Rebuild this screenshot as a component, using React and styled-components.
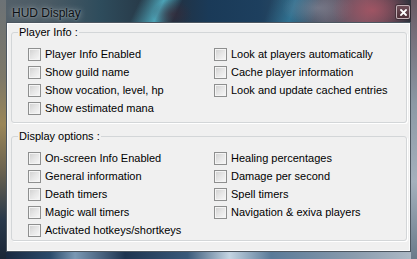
import React from "react";
import styled, { createGlobalStyle } from "styled-components";

const GlobalStyle = createGlobalStyle`
  html, body {
    margin: 0;
    padding: 0;
    background: #2a3038;
  }
`;

const playerInfo = [
  "Player Info Enabled",
  "Show guild name",
  "Show vocation, level, hp",
  "Show estimated mana",
  "Look at players automatically",
  "Cache player information",
  "Look and update cached entries",
];

const displayOptions = [
  "On-screen Info Enabled",
  "General information",
  "Death timers",
  "Magic wall timers",
  "Activated hotkeys/shortkeys",
  "Healing percentages",
  "Damage per second",
  "Spell timers",
  "Navigation & exiva players",
];

const HudDisplay = () => {
  return (
    <Window>
      <TitleBar>
        <Title>HUD Display</Title>
        <CloseBtn aria-label="Close">
          <svg width="7" height="7" viewBox="0 0 7 7">
            <path
              d="M1 1 L6 6 M6 1 L1 6"
              stroke="#fff"
              strokeWidth="1.8"
              strokeLinecap="square"
            />
          </svg>
        </CloseBtn>
      </TitleBar>

      <Client>
        <Group>
          <Legend>Player Info :</Legend>
          <Options $rows={4} $bottom={5}>
            {playerInfo.map((label) => (
              <Option key={label}>
                <Check type="checkbox" />
                {label}
              </Option>
            ))}
          </Options>
        </Group>

        <Group $top={7}>
          <Legend>Display options :</Legend>
          <Options $rows={5} $bottom={1}>
            {displayOptions.map((label) => (
              <Option key={label}>
                <Check type="checkbox" />
                {label}
              </Option>
            ))}
          </Options>
        </Group>
      </Client>
    </Window>
  );
};

const Window = styled.div`
  width: 417px;
  height: 259px;
  box-sizing: border-box;
  padding: 0 6px 7px 6px;
  display: flex;
  flex-direction: column;
  font-family: "Liberation Sans", Arial, sans-serif;
  background:
    linear-gradient(180deg, #6c7276 0%, #7d7868 30%, #9a8658 48%, #6a6250 66%, #28384a 85%, #1a2636 100%) left top / 6px 100% no-repeat,
    linear-gradient(180deg, #6a5a64 0%, #8c98a4 40%, #a4b0bc 70%, #6a7a8a 100%) right top / 6px 100% no-repeat,
    linear-gradient(90deg, #16243a 0%, #2a4a6a 12%, #7a98b4 18%, #1e3450 30%, #3a5a7a 45%, #c4d4e2 55%, #5a7a98 65%, #8a9cae 85%, #b0bcc8 100%) left bottom / 100% 7px no-repeat,
    radial-gradient(ellipse 40px 26px at 372px 10px, rgba(165, 85, 100, 0.9), transparent),
    radial-gradient(ellipse 36px 18px at 318px 8px, rgba(150, 150, 165, 0.5), transparent),
    radial-gradient(ellipse 20px 14px at 172px 14px, rgba(60, 40, 55, 0.6), transparent),
    linear-gradient(115deg, transparent 26%, rgba(80, 175, 195, 0.9) 30.5%, transparent 34%),
    linear-gradient(108deg, transparent 54%, rgba(50, 130, 165, 0.7) 59%, transparent 64%),
    linear-gradient(90deg, #55616a 0%, #4a5a64 12%, #2e4c5c 24%, #24303e 40%, #1a3a58 50%, #1d3f5e 62%, #2c4a62 70%, #5a5a6a 78%, #6e5260 88%, #3c3844 96%, #2a3038 100%);
`;

const TitleBar = styled.div`
  height: 22px;
  flex: none;
  display: flex;
  align-items: flex-start;
  justify-content: space-between;
  margin: 0 -6px;
  padding: 0 7px 0 12px;
`;

const Title = styled.span`
  margin-top: 6px;
  font-family: "Liberation Sans", Arial, sans-serif;
  font-size: 12px;
  line-height: 14px;
  color: #0c1014;
  text-shadow: 0 0 6px rgba(255, 255, 255, 0.6), 0 0 2px rgba(255, 255, 255, 0.35);
`;

const CloseBtn = styled.button`
  margin-top: 5px;
  width: 14px;
  height: 14px;
  padding: 0;
  display: flex;
  align-items: center;
  justify-content: center;
  border: 1px solid rgba(220, 205, 210, 0.8);
  border-radius: 2px;
  background: linear-gradient(180deg, #6e4e58 0%, #4e3038 100%);
  box-shadow: 0 0 0 1px rgba(40, 30, 35, 0.5);
`;

const Client = styled.div`
  flex: 1;
  background: #f0f0f0;
  border: 1px solid #4c5660;
  box-shadow: inset 0 0 0 1px #fbfbfb;
  padding: 3px 3px 0 4px;
  display: flex;
  flex-direction: column;
`;

const Group = styled.fieldset`
  margin: ${(p) => p.$top || 0}px 0 0 0;
  padding: 0;
  border: 1px solid #d3d6d8;
  border-radius: 3px;
  box-shadow: 1px 1px 0 #ffffff;
  min-width: 0;
`;

const Legend = styled.legend`
  margin-left: 6px;
  padding: 0 1px;
  font-size: 11px;
  line-height: 13px;
  color: #000;
`;

const Options = styled.div`
  display: grid;
  grid-auto-flow: column;
  grid-template-columns: 186px 1fr;
  grid-template-rows: repeat(${(p) => p.$rows}, 18px);
  padding: 6px 0 ${(p) => p.$bottom}px 16px;
`;

const Option = styled.label`
  display: flex;
  align-items: center;
  gap: 4px;
  font-size: 11px;
  color: #000;
  white-space: nowrap;
`;

const Check = styled.input`
  appearance: none;
  margin: 0;
  width: 13px;
  height: 13px;
  flex: none;
  box-sizing: border-box;
  border: 1px solid #8e8f8f;
  background: linear-gradient(135deg, #cfcfcf 0%, #e6e6e6 50%, #f8f8f8 100%);
  box-shadow: inset 0 0 0 1px #f4f4f4;
`;

const App = () => (
  <>
    <GlobalStyle />
    <HudDisplay />
  </>
);

export default App;
